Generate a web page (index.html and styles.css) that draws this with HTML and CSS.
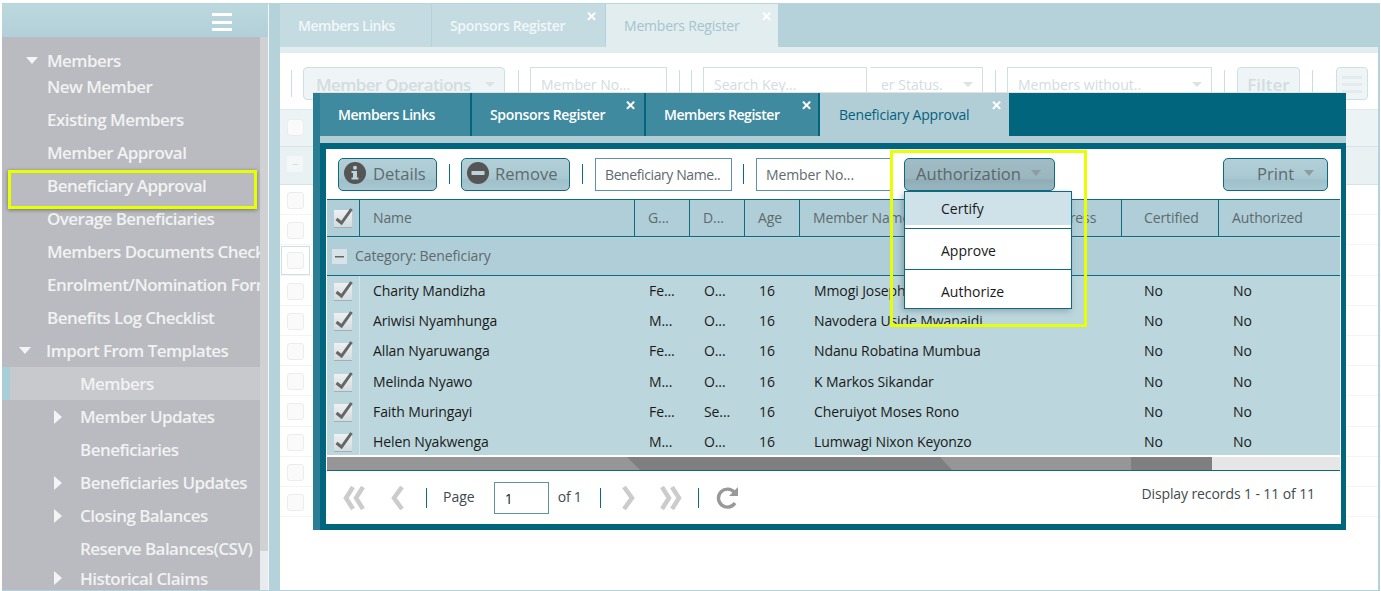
FILE: index.html
```html
<!DOCTYPE html>
<html lang="en">
<head>
<meta charset="utf-8">
<title>Beneficiary Approval</title>
<link rel="stylesheet" href="styles.css">
</head>
<body>
<div class="frame">
  <aside class="sidebar">
    <div class="side-head"><div class="burger"><i></i><i></i><i></i></div></div>
    <div class="side-body">
      <nav class="nav">
        <div class="nav-item top"><span class="caret-down"></span>Members</div>
        <div class="nav-item l1">New Member</div>
        <div class="nav-item l1">Existing Members</div>
        <div class="nav-item l1">Member Approval</div>
        <div class="nav-item l1">Beneficiary Approval</div>
        <div class="nav-item l1">Overage Beneficiaries</div>
        <div class="nav-item l1">Members Documents Checklist</div>
        <div class="nav-item l1">Enrolment/Nomination Forms</div>
        <div class="nav-item l1">Benefits Log Checklist</div>
        <div class="nav-item imp"><span class="caret-down"></span>Import From Templates</div>
        <div class="nav-item l2 active">Members</div>
        <div class="nav-item l2c"><span class="caret-right"></span>Member Updates</div>
        <div class="nav-item l2">Beneficiaries</div>
        <div class="nav-item l2c"><span class="caret-right"></span>Beneficiaries Updates</div>
        <div class="nav-item l2c"><span class="caret-right"></span>Closing Balances</div>
        <div class="nav-item l2">Reserve Balances(CSV)</div>
        <div class="nav-item l2c short"><span class="caret-right"></span>Historical Claims</div>
      </nav>
      <div class="side-scroll"><div class="side-thumb"></div></div>
    </div>
  </aside>

  <main class="main">
    <div class="tabs bg-tabs">
      <div class="tab">Members Links</div>
      <div class="tab">Sponsors Register<span class="x">✕</span></div>
      <div class="tab current">Members Register<span class="x">✕</span></div>
    </div>
    <div class="page">
      <div class="bg-toolbar">
        <span class="bsep s1"></span>
        <div class="bfield w-ops btnlike big">Member Operations<span class="bcaret"></span></div>
        <span class="bsep s2"></span>
        <div class="bfield w-no">Member No...</div>
        <span class="bsep s3"></span><span class="bsep s4"></span>
        <div class="bfield w-key">Search Key...</div>
        <div class="bfield w-status">er Status.<span class="bcaret"></span></div>
        <span class="bsep s5"></span>
        <div class="bfield w-without">Members without..<span class="bcaret"></span></div>
        <span class="bsep s6"></span>
        <div class="bfield w-filter btnlike big">Filter</div>
        <span class="bsep s7"></span>
        <div class="bfield w-menu btnlike"><div class="burger faint"><i></i><i></i><i></i></div></div>
      </div>
      <div class="bg-head"><span class="bg-box"></span></div>
      <div class="bg-group"><span class="bg-minus">–</span></div>
      <div class="bg-rows">
        <div class="bg-row"><span class="bg-box"></span></div>
        <div class="bg-row"><span class="bg-box"></span></div>
        <div class="bg-row"><span class="bg-box sel"></span></div>
        <div class="bg-row"><span class="bg-box"></span></div>
        <div class="bg-row"><span class="bg-box"></span></div>
        <div class="bg-row"><span class="bg-box"></span></div>
        <div class="bg-row"><span class="bg-box"></span></div>
        <div class="bg-row"><span class="bg-box"></span></div>
        <div class="bg-row"><span class="bg-box"></span></div>
        <div class="bg-row"><span class="bg-box"></span></div>
        <div class="bg-row"><span class="bg-box"></span></div>
      </div>
    </div>
  </main>
</div>

<section class="window">
  <div class="tabs win-tabs">
    <div class="tab">Members Links</div>
    <div class="tab">Sponsors Register<span class="x">✕</span></div>
    <div class="tab">Members Register<span class="x">✕</span></div>
    <div class="tab current">Beneficiary Approval<span class="x">✕</span></div>
  </div>
  <div class="win-strip"></div>
  <div class="panel">
    <div class="toolbar">
      <button class="btn w-details">
        <svg class="ico" viewBox="0 0 22 22"><circle cx="11" cy="11" r="11" fill="#555"/><rect x="9" y="9" width="4" height="8" fill="#bcd3da"/><rect x="7.5" y="15.5" width="7" height="2" fill="#bcd3da"/><rect x="7.5" y="9" width="3" height="2" fill="#bcd3da"/><circle cx="11" cy="5.8" r="2" fill="#bcd3da"/></svg>
        Details
      </button>
      <span class="sep sa"></span>
      <button class="btn w-remove">
        <svg class="ico" viewBox="0 0 22 22"><circle cx="11" cy="11" r="11" fill="#555"/><rect x="4.5" y="9" width="13" height="4" fill="#bcd3da"/></svg>
        Remove
      </button>
      <span class="sep sb"></span>
      <div class="input w-bname">Beneficiary Name..</div>
      <span class="sep sc"></span>
      <div class="input w-mno">Member No...</div>
      <button class="btn w-auth open">Authorization<span class="caret"></span></button>
      <button class="btn w-print">Print<span class="caret"></span></button>
    </div>
    <div class="grid-wrap">
      <table class="grid">
        <colgroup>
          <col class="c-chk"><col class="c-name"><col class="c-g"><col class="c-g"><col class="c-g"><col class="c-mem"><col class="c-addr"><col class="c-cert"><col class="c-auth">
        </colgroup>
        <thead>
          <tr>
            <th class="chk"><span class="check"><svg viewBox="0 0 20 20"><path d="M2.5 12l5 4L17.5 2" fill="none" stroke="#666" stroke-width="3"/></svg></span></th>
            <th>Name</th><th>G...</th><th>D...</th><th>Age</th><th>Member Name</th><th>Address</th><th class="wide">Certified</th><th class="end">Authorized</th>
          </tr>
        </thead>
        <tbody>
          <tr class="group"><td colspan="9"><span class="minus"></span>Category: Beneficiary</td></tr>
          <tr><td class="chk"><span class="check"><svg viewBox="0 0 20 20"><path d="M2.5 12l5 4L17.5 2" fill="none" stroke="#666" stroke-width="3"/></svg></span></td><td>Charity Mandizha</td><td>Fe...</td><td>O...</td><td>16</td><td colspan="2">Mmogi Joseph Phiri</td><td class="wide">No</td><td>No</td></tr>
          <tr><td class="chk"><span class="check"><svg viewBox="0 0 20 20"><path d="M2.5 12l5 4L17.5 2" fill="none" stroke="#666" stroke-width="3"/></svg></span></td><td>Ariwisi Nyamhunga</td><td>M...</td><td>O...</td><td>16</td><td colspan="2">Navodera Uside Mwanaidi</td><td class="wide">No</td><td>No</td></tr>
          <tr class="tall"><td class="chk"><span class="check"><svg viewBox="0 0 20 20"><path d="M2.5 12l5 4L17.5 2" fill="none" stroke="#666" stroke-width="3"/></svg></span></td><td>Allan Nyaruwanga</td><td>Fe...</td><td>O...</td><td>16</td><td colspan="2">Ndanu Robatina Mumbua</td><td class="wide">No</td><td>No</td></tr>
          <tr><td class="chk"><span class="check"><svg viewBox="0 0 20 20"><path d="M2.5 12l5 4L17.5 2" fill="none" stroke="#666" stroke-width="3"/></svg></span></td><td>Melinda Nyawo</td><td>M...</td><td>O...</td><td>16</td><td colspan="2">K Markos Sikandar</td><td class="wide">No</td><td>No</td></tr>
          <tr><td class="chk"><span class="check"><svg viewBox="0 0 20 20"><path d="M2.5 12l5 4L17.5 2" fill="none" stroke="#666" stroke-width="3"/></svg></span></td><td>Faith Muringayi</td><td>Fe...</td><td>Se...</td><td>16</td><td colspan="2">Cheruiyot Moses Rono</td><td class="wide">No</td><td>No</td></tr>
          <tr><td class="chk"><span class="check"><svg viewBox="0 0 20 20"><path d="M2.5 12l5 4L17.5 2" fill="none" stroke="#666" stroke-width="3"/></svg></span></td><td>Helen Nyakwenga</td><td>M...</td><td>O...</td><td>16</td><td colspan="2">Lumwagi Nixon Keyonzo</td><td class="wide">No</td><td>No</td></tr>
        </tbody>
      </table>
    </div>
    <svg class="hscroll" viewBox="0 0 1013 13" preserveAspectRatio="none">
      <rect width="1013" height="13" fill="#969696"/>
      <polygon points="300,0 313,13 625,13 613,0" fill="#7f7f7f"/>
      <rect x="804" width="81" height="13" fill="#7f7f7f"/>
      <rect x="885" width="128" height="13" fill="#e6e6e6"/>
    </svg>
    <div class="pager">
      <svg class="pg dbl" viewBox="0 0 24 24"><path d="M11 1L4 12l7 11M21 1l-7 11 7 11" fill="none" stroke="#ccc" stroke-width="4.5"/></svg>
      <svg class="pg sgl prev" viewBox="0 0 15 24"><path d="M12 1L4 12l8 11" fill="none" stroke="#ccc" stroke-width="4.5"/></svg>
      <span class="sep s-a"></span>
      <span class="pg-text page-label">Page</span>
      <div class="pg-input">1</div>
      <span class="pg-text of">of 1</span>
      <span class="sep s-b"></span>
      <svg class="pg sgl next" viewBox="0 0 15 24"><path d="M3 1l8 11-8 11" fill="none" stroke="#ccc" stroke-width="4.5"/></svg>
      <svg class="pg dbl pg-last" viewBox="0 0 24 24"><path d="M3 1l7 11-7 11M13 1l7 11-7 11" fill="none" stroke="#ccc" stroke-width="4.5"/></svg>
      <span class="sep s-c"></span>
      <svg class="pg reload" viewBox="0 0 23 23"><path d="M18.5 6.5A9 9 0 1 0 19 17" fill="none" stroke="#999" stroke-width="3.4"/><polygon points="22,1 22,10 13,10" fill="#999"/></svg>
      <span class="records">Display records 1 - 11 of 11</span>
    </div>
  </div>
</section>

<ul class="menu">
  <li class="hl">Certify</li>
  <li>Approve</li>
  <li>Authorize</li>
</ul>

<div class="mark mark-nav"></div>
<div class="mark mark-menu"></div>
</body>
</html>
```
FILE: styles.css
```css
* { box-sizing: border-box; }
html, body { margin: 0; padding: 0; }
body {
  width: 1381px;
  height: 591px;
  overflow: hidden;
  position: relative;
  background: #fff;
  font-family: "Open Sans", "Noto Sans", sans-serif;
  font-size: 14px;
  color: #1a1a1a;
}

.frame {
  display: flex;
  margin: 3px 1px 0 2px;
  height: 588px;
  padding-right: 2px;
  padding-bottom: 1px;
  background: #b5d1d9;
  border-top: 1px solid #b9d5dc;
}

/* Sidebar */
.sidebar { width: 267px; flex: none; display: flex; flex-direction: column; border-right: 1px solid #f4f7f8; }
.side-head {
  height: 33px;
  flex: none;
  display: flex;
  justify-content: flex-end;
  padding: 9px 36px 0 0;
  background: linear-gradient(#bcd8df, #b2d0d8);
}
.burger { display: flex; flex-direction: column; gap: 4.5px; width: 20px; }
.burger i { display: block; height: 3px; background: #fff; }
.burger.faint { width: 20px; margin: 8px auto 0; gap: 4px; }
.burger.faint i { background: #e4ebee; height: 3px; }
.side-body { flex: 1; display: flex; min-height: 0; }
.nav { width: 258px; flex: none; background: #b9bbc0; padding-top: 14px; overflow: hidden; }
.side-scroll { flex: 1; background: #e9ecee; }
.side-thumb { height: 514px; background: #d0d1d3; }
.nav-item {
  height: 33px;
  line-height: 33px;
  white-space: nowrap;
  font-size: 17px;
  font-weight: 600;
  letter-spacing: -0.55px;
  color: #f1f2f3;
  display: flex;
  align-items: center;
}
.nav-item.top { height: 19px; padding-left: 24px; }
.nav-item.top .caret-down { margin-right: 9px; }
.nav-item.l1 { padding-left: 45px; }
.nav-item.imp { padding-left: 17px; }
.nav-item.imp .caret-down { margin-right: 15px; }
.nav-item.l2 { padding-left: 78px; }
.nav-item.l2c { padding-left: 52px; }
.nav-item.short { height: 26px; }
.nav-item.active { background: #c8c9cc; border-left: 8px solid #a8cfd8; padding-left: 70px; }
.caret-down { width: 0; height: 0; flex: none; border-left: 6.5px solid transparent; border-right: 6.5px solid transparent; border-top: 7px solid #f4f4f4; }
.caret-right { width: 0; height: 0; flex: none; margin-right: 18px; border-top: 7px solid transparent; border-bottom: 7px solid transparent; border-left: 8px solid #f4f4f4; }

/* Tabs */
.tabs { display: flex; }
.tab {
  position: relative;
  height: 43px;
  line-height: 43px;
  white-space: nowrap;
  font-size: 14px;
  font-weight: 600;
  letter-spacing: -0.45px;
  padding-left: 18px;
}
.tab:nth-child(2) { letter-spacing: -0.33px; }
.x { position: absolute; top: -9px; right: 8px; font-size: 13px; font-weight: 700; color: #fff; letter-spacing: 0; }
.tab:nth-child(3) .x { right: 6px; }
.tab:nth-child(4) .x { right: 7px; }
.bg-tabs .tab { background: #c3dbe1; color: #f2f7f8; border-right: 1px solid #b5d1d9; }
.bg-tabs .tab:nth-child(1) { width: 152px; }
.bg-tabs .tab:nth-child(2) { width: 174px; }
.bg-tabs .tab:nth-child(3) { width: 173px; }
.bg-tabs .tab.current { background: #e2edf0; color: #a4c4ce; font-weight: 400; letter-spacing: -0.2px; }

/* Background page */
.main { flex: 1; min-width: 0; display: flex; flex-direction: column; padding-left: 11px; }
.page { flex: 1; background: #fff; border-top: 6px solid #e2edf0; }
.bg-toolbar { position: relative; height: 57px; display: flex; align-items: flex-start; padding-top: 14px; border-bottom: 1px solid #e1ebee; }
.bsep { flex: none; width: 1px; height: 27px; margin-top: 3px; background: #c9dde2; }
.bfield {
  flex: none;
  position: relative;
  height: 33px;
  line-height: 34px;
  padding-left: 10px;
  font-size: 14px;
  color: #d3dcdf;
  border: 1px solid #cfe0e5;
  border-bottom-color: transparent;
  white-space: nowrap;
}
.btnlike { border-radius: 4px; background: #eff5f6; border-bottom-color: #cfe0e5; }
.big { font-size: 17px; font-weight: 600; letter-spacing: -0.65px; }
.s1 { margin-left: 11px; }
.w-ops { width: 202px; margin-left: 11px; padding-left: 12px; }
.s2 { margin-left: 13px; }
.w-no { width: 137px; margin-left: 11px; }
.s3 { margin-left: 12px; }
.s4 { margin-left: 11px; }
.w-key { width: 164px; margin-left: 11px; }
.w-status { width: 113px; margin-left: 3px; border-left-color: transparent; }
.s5 { margin-left: 12px; }
.w-without { width: 205px; margin-left: 11px; }
.s6 { margin-left: 12px; }
.w-filter { width: 63px; margin-left: 12px; text-align: center; padding-left: 0; letter-spacing: 0; }
.s7 { margin-left: 12px; }
.w-menu { width: 32px; margin-left: 23px; padding: 0; }
.bcaret { position: absolute; right: 9px; top: 14px; width: 0; height: 0; border-left: 5px solid transparent; border-right: 5px solid transparent; border-top: 5px solid #dde3e5; }
.bg-head { height: 37px; background: #ecf3f5; border-bottom: 1px solid #d5e4e8; padding: 9px 0 0 7px; }
.bg-group { height: 38px; background: #e9f1f3; border-bottom: 1px solid #d5e4e8; padding: 9px 0 0 7px; }
.bg-minus { display: block; width: 16px; height: 16px; line-height: 14px; background: #f4f7f8; color: #d8dfe2; text-align: center; font-size: 13px; }
.bg-row { height: 30.2px; border-bottom: 1px solid #f4f4f4; padding: 7px 0 0 7px; }
.bg-box { display: block; position: relative; width: 17px; height: 17px; border-radius: 3px; background: #fafafa; border: 1px solid #ececec; }
.bg-box.sel::before { content: ""; position: absolute; inset: -7px; border: 1px solid #cfe0e5; }

/* Window */
.window {
  position: absolute;
  left: 313px;
  top: 93px;
  width: 1033px;
  height: 437px;
  background: linear-gradient(to right, #2b7d94 7px, #02657e 7px);
  box-shadow: 0 -1px 0 #dfe3e4;
  padding-left: 7px;
}
.win-tabs { height: 43px; }
.win-tabs .tab { background: #3f8a9e; color: #fff; border-right: 2px solid #02657e; }
.win-tabs .tab:nth-child(1) { width: 152px; }
.win-tabs .tab:nth-child(2) { width: 174px; }
.win-tabs .tab:nth-child(3) { width: 174px; }
.win-tabs .tab:nth-child(4) { width: 189px; border-right: 0; }
.win-tabs .tab.current { background: #b1cdd6; color: #04617b; font-weight: 400; letter-spacing: -0.2px; padding-left: 19px; }
.win-strip { height: 7px; background: #b2cdd6; }
.panel { height: 387px; width: 1026px; background: #fff; border: 6px solid #02657e; border-right-width: 5px; border-radius: 4px 4px 0 0; }

.toolbar { position: relative; height: 50px; display: flex; align-items: center; padding: 0 0 0 12px; }
.btn {
  flex: none;
  height: 33px;
  display: flex;
  align-items: center;
  gap: 7px;
  padding: 0 0 2px 5px;
  border: 1px solid #0d6a80;
  border-radius: 5px;
  background: linear-gradient(#b3cfd7 0, #a9c9d2 60%, #9fc0ca 70%, #a9c8d2 100%);
  color: #5f6a6e;
  font-family: inherit;
  font-size: 16.6px;
}
.ico { width: 22px; height: 22px; flex: none; }
.w-details { width: 99px; }
.w-remove { width: 109px; gap: 6px; }
.sep { flex: none; width: 1px; height: 20px; background: #0d6a80; }
.sa { margin: 0 11px 0 12px; }
.sb { margin: 0 12px; }
.sc { margin: 0 12px 0 11px; }
.input {
  flex: none;
  height: 33px;
  line-height: 32px;
  padding-left: 9px;
  border: 1px solid #5d93a3;
  font-size: 14px;
  color: #5f6a6e;
  white-space: nowrap;
  overflow: hidden;
}
.w-bname { width: 137px; letter-spacing: -0.4px; }
.w-mno { width: 137px; border-right: 0; letter-spacing: -0.1px; }
.w-auth { width: 151px; margin-left: 11px; padding-left: 11px; background: linear-gradient(#a1bcc4, #9ab6bf 60%, #90adb7 70%, #9cb8c1); color: #5c676b; }
.w-print { width: 105px; margin-left: auto; margin-right: 13px; padding-left: 33px; }
.caret { width: 0; height: 0; flex: none; margin-left: 3px; border-left: 5px solid transparent; border-right: 5px solid transparent; border-top: 6px solid #8e9ca1; }

.grid-wrap { height: 256px; margin: 0 0 0 1px; width: 1013px; overflow: hidden; }
.grid { width: 1013px; border-collapse: separate; border-spacing: 0; table-layout: fixed; font-size: 14px; letter-spacing: -0.1px; }
.c-chk { width: 33px; }
.c-name { width: 275px; }
.c-g { width: 55px; }
.c-mem { width: 231px; }
.c-addr { width: 91px; }
.c-cert { width: 97px; }
.c-auth { width: 121px; }
.grid th {
  height: 38px;
  padding: 0 0 2px 13px;
  text-align: left;
  font-weight: 400;
  color: #5f6a6e;
  background: #afced7;
  border-top: 1px solid #0d6a80;
  border-bottom: 1px solid #0d6a80;
  border-right: 1px solid #0d6a80;
  white-space: nowrap;
  overflow: hidden;
}
.grid th.end { border-right: 0; }
.grid th.wide, .grid td.wide { padding-left: 22px; }
.grid td {
  height: 30px;
  padding: 0 0 2px 14px;
  background: #bcd6dd;
  color: #1a1a1a;
  white-space: nowrap;
  overflow: hidden;
}
.grid .tall td { height: 31px; }
.grid td:nth-child(2) { padding-left: 13px; }
.grid .chk { padding: 0 0 0 7px; }
.grid td.chk { border-right: 1px solid #d4e4e9; }
.grid .group td {
  height: 39px;
  padding-left: 5px;
  background: #afced7;
  color: #5f6a6e;
  border-bottom: 1px solid #0d6a80;
  border-top: 1px solid #bad4db;
}
.minus { display: inline-block; vertical-align: middle; width: 15px; height: 15px; margin: -2px 8px 0 0; background: linear-gradient(#666,#666) center / 9px 1.5px no-repeat #d8e3e7; }
.check { display: block; width: 19px; height: 20px; margin-top: -3px; background: linear-gradient(#eef1f3, #d3dbde) 0 3px / 18px 17px no-repeat; filter: drop-shadow(0 1px 0 #9fb0b6); }
.check svg { display: block; width: 20px; height: 20px; }

.hscroll { display: block; width: 1013px; height: 13px; margin: 2px 0 0 1px; }
.pager {
  height: 54px;
  display: flex;
  align-items: center;
  border-top: 1px solid #0d6a80;
  margin-left: 1px;
  width: 1013px;
  position: relative;
}
.pg { flex: none; display: block; }
.dbl { width: 24px; height: 24px; margin-left: 15px; }
.prev { width: 15px; height: 24px; margin-left: 24px; }
.s-a { margin-left: 21px; }
.pg-text { flex: none; color: #3f4a4e; margin-bottom: 2px; }
.page-label { margin-left: 16px; }
.pg-input { flex: none; width: 55px; height: 32px; line-height: 32px; margin-left: 19px; padding-left: 10px; border: 1px solid #5d93a3; color: #1a1a1a; }
.of { margin-left: 9px; letter-spacing: -0.2px; }
.s-b { margin-left: 18px; }
.next { width: 15px; height: 24px; margin-left: 20px; }
.pg-last { margin-left: 23px; }
.s-c { margin-left: 15px; }
.reload { width: 23px; height: 23px; margin-left: 17px; }
.records { margin-left: auto; margin-right: 25px; margin-bottom: 8px; color: #3f4a4e; letter-spacing: -0.1px; }

/* Dropdown */
.menu {
  position: absolute;
  left: 904px;
  top: 191px;
  width: 168px;
  height: 118px;
  margin: 0;
  padding: 0;
  list-style: none;
  background: #fff;
  border: 1px solid #0d6a80;
  box-shadow: -2px 2px 6px rgba(60, 80, 90, .35);
  z-index: 2;
}
.menu li { height: 41px; line-height: 33px; padding: 0 0 0 36px; color: #1a1a1a; }
.menu li + li { border-top: 1px solid #0d6a80; height: 41px; line-height: 43px; }
.menu li.hl { height: 36px; background: linear-gradient(#d0e2e9 33px, #fff 33px); }

/* Highlights */
.mark { position: absolute; border: 3px solid #e8ff00; z-index: 3; pointer-events: none; }
.mark-nav { left: 8px; top: 170px; width: 249px; height: 39px; box-shadow: 0 1px 4px rgba(0, 0, 0, .4); }
.mark-menu { left: 890px; top: 150px; width: 197px; height: 177px; }
```
